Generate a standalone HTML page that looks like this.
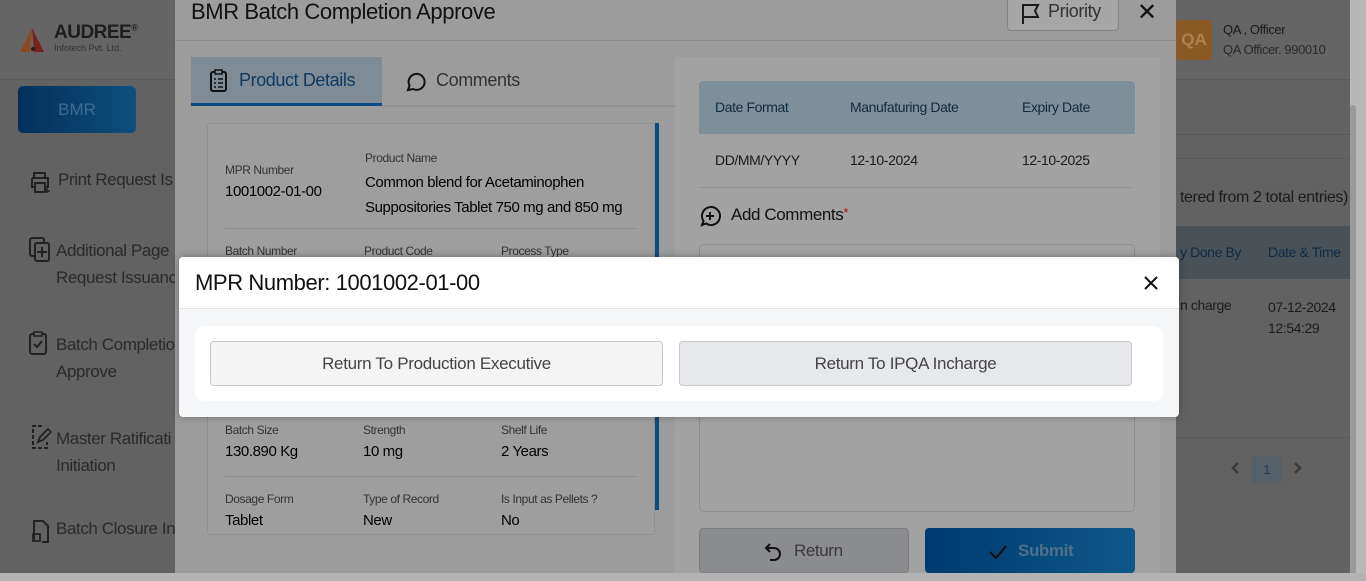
<!DOCTYPE html>
<html><head><meta charset="utf-8"><style>
*{margin:0;padding:0;box-sizing:border-box}
body{width:1366px;height:581px;overflow:hidden;background:#626262;font-family:"Liberation Sans",sans-serif;position:relative;color:#111}
.a{position:absolute;white-space:nowrap}
.n{letter-spacing:-0.4px}
</style></head><body>
<div class="a" style="left:0;top:0;width:1366px;height:80px;background:#656565;border-bottom:1px solid #5a5a5a"></div>
<svg class="a" style="left:20px;top:28px" width="28" height="24"><polygon points="12,0 0,24 10,24" fill="#8a4a20"/><polygon points="12,0 24,24 14,24" fill="#7a2020"/><circle cx="13" cy="21" r="2" fill="#222"/></svg>
<div class="a" style="left:54px;top:22px;font-weight:bold;font-size:19px;color:#1e1e1e;letter-spacing:-0.5px">AUDREE<sup style="font-size:9px">®</sup></div>
<div class="a" style="left:54px;top:43px;font-size:9px;color:#333">Infotech Pvt. Ltd.</div>
<div class="a" style="left:18px;top:86px;width:118px;height:47px;border-radius:5px;background:linear-gradient(90deg,#03305a,#0f4f7c);color:#3f6b8f;font-size:17px;text-align:center;line-height:47px">BMR</div>
<div class="a n" style="left:58px;top:170px;font-size:17px;color:#2a2a2a">Print Request Is</div>
<div class="a n" style="left:56px;top:237px;font-size:17px;color:#2a2a2a;line-height:27px;white-space:normal;width:130px">Additional Page Request Issuanc</div>
<div class="a n" style="left:56px;top:331px;font-size:17px;color:#2a2a2a;line-height:27px;width:130px;white-space:normal">Batch Completio Approve</div>
<div class="a n" style="left:56px;top:425px;font-size:17px;color:#2a2a2a;line-height:27px;width:130px;white-space:normal">Master Ratificati Initiation</div>
<div class="a n" style="left:56px;top:519px;font-size:17px;color:#2a2a2a">Batch Closure In</div>
<svg class="a" style="left:28px;top:170px" width="24" height="24"><path d="M6 8V3h11v5M4 8h16v9h-3M7 17H4V8M7 13h10v9H7z" fill="none" stroke="#222" stroke-width="2"/><path d="M19 18v5M17 21h5" stroke="#222" stroke-width="1.5"/></svg>
<svg class="a" style="left:28px;top:236px" width="24" height="26"><rect x="2" y="2" width="14" height="18" rx="2" fill="none" stroke="#222" stroke-width="2"/><rect x="7" y="7" width="14" height="18" rx="2" fill="#626262" stroke="#222" stroke-width="2"/><path d="M14 11v10M9 16h10" stroke="#222" stroke-width="2"/></svg>
<svg class="a" style="left:28px;top:330px" width="22" height="26"><rect x="2" y="4" width="16" height="20" rx="2" fill="none" stroke="#222" stroke-width="2"/><rect x="6" y="2" width="8" height="4" fill="#626262" stroke="#222" stroke-width="1.5"/><path d="M6 14l3 3 5-6" fill="none" stroke="#222" stroke-width="2"/></svg>
<svg class="a" style="left:30px;top:424px" width="22" height="26"><path d="M12 2H3v22h14v-6" fill="none" stroke="#222" stroke-width="2" stroke-dasharray="4 2"/><path d="M8 18l2-5 8-8 3 3-8 8z" fill="none" stroke="#222" stroke-width="1.8"/></svg>
<svg class="a" style="left:30px;top:518px" width="20" height="26"><path d="M4 24V3h9l5 5v16h-6" fill="none" stroke="#222" stroke-width="2"/><rect x="3" y="16" width="7" height="7" fill="none" stroke="#222" stroke-width="1.8"/></svg>
<div class="a" style="left:1176px;top:20px;width:36px;height:40px;border-radius:4px;background:#8a5a25;color:#b08050;font-weight:bold;font-size:17px;line-height:40px;text-align:center">QA</div>
<div class="a n" style="left:1223px;top:22px;font-size:13px;color:#1a1a1a">QA , Officer</div>
<div class="a n" style="left:1223px;top:42px;font-size:13px;color:#2a2a2a">QA Officer. 990010</div>
<div class="a" style="left:1176px;top:134px;width:174px;height:1px;background:#575757"></div>
<div class="a" style="left:1176px;top:158px;width:174px;height:1px;background:#595959"></div>
<div class="a n" style="left:1180px;top:189px;font-size:16px;color:#1c1c1c">tered from 2 total entries)</div>
<div class="a" style="left:1176px;top:226px;width:174px;height:53px;background:#4a5257"></div>
<div class="a n" style="left:1180px;top:244px;font-size:14px;color:#0e2a45">y Done By</div>
<div class="a n" style="left:1268px;top:244px;font-size:14px;color:#0e2a45">Date &amp; Time</div>
<div class="a n" style="left:1180px;top:297px;font-size:14px;color:#1c1c1c">n charge</div>
<div class="a n" style="left:1268px;top:297px;font-size:14px;color:#1c1c1c;line-height:21px">07-12-2024<br>12:54:29</div>
<div class="a" style="left:1176px;top:437px;width:174px;height:1px;background:#595959"></div>
<svg class="a" style="left:1230px;top:461px" width="12" height="14"><path d="M8 2L3 7l5 5" fill="none" stroke="#3a3a3a" stroke-width="2.5"/></svg>
<div class="a" style="left:1252px;top:456px;width:30px;height:27px;border-radius:4px;background:#566069;color:#1e3a55;font-size:13px;text-align:center;line-height:27px">1</div>
<svg class="a" style="left:1292px;top:461px" width="12" height="14"><path d="M3 2l5 5-5 5" fill="none" stroke="#3a3a3a" stroke-width="2.5"/></svg>
<div class="a" style="left:1350px;top:0;width:16px;height:581px;background:#b8b8b8"></div>
<div class="a" style="left:1350px;top:105px;width:6px;height:470px;background:#9a9a9a;border-radius:3px"></div>
<div class="a" style="left:0;top:573px;width:1366px;height:8px;background:#b3b3b3"></div>

<div class="a" style="left:175px;top:0;width:1001px;height:573px;background:#9c9c9c"></div>
<div class="a" style="left:175px;top:40px;width:1001px;height:1px;background:#8e8e8e"></div>
<div class="a n" style="left:191px;top:-1px;font-size:22px;color:#111">BMR Batch Completion Approve</div>
<div class="a" style="left:1007px;top:-4px;width:112px;height:35px;border:1px solid #838383;border-radius:4px;background:#a6a6a6"></div>
<svg class="a" style="left:1020px;top:2px" width="22" height="24"><path d="M3 22V2M3 3h15l-3 6 3 6H3" fill="none" stroke="#1a1a1a" stroke-width="2"/></svg>
<div class="a n" style="left:1048px;top:1px;font-size:18px;color:#333">Priority</div>
<div class="a" style="left:1137px;top:-2px;font-size:24px;color:#111">✕</div>
<div class="a" style="left:675px;top:57px;width:485px;height:516px;background:#a2a2a2"></div>
<div class="a" style="left:191px;top:57px;width:191px;height:49px;background:#7f8c96"></div>
<div class="a" style="left:191px;top:103px;width:191px;height:3px;background:#0d4b82"></div>
<div class="a" style="left:382px;top:105px;width:293px;height:2px;background:#8f9296"></div>
<svg class="a" style="left:209px;top:69px" width="20" height="24"><rect x="2" y="3" width="15" height="19" rx="2" fill="none" stroke="#111" stroke-width="2"/><rect x="6" y="1" width="7" height="4" fill="#7f8c96" stroke="#111" stroke-width="1.5"/><path d="M5 10h2M9 10h5M5 14h2M9 14h5M5 18h2M9 18h5" stroke="#111" stroke-width="1.5"/></svg>
<div class="a n" style="left:239px;top:70px;font-size:18px;color:#0e3a62">Product Details</div>
<svg class="a" style="left:404px;top:69px" width="24" height="24"><path d="M4 21l1.5-4.5A8 8 0 1 1 9 20z" fill="none" stroke="#111" stroke-width="2"/></svg>
<div class="a n" style="left:436px;top:70px;font-size:18px;color:#333">Comments</div>
<div class="a" style="left:207px;top:123px;width:448px;height:412px;border:1px solid #909090;border-radius:3px;background:#9e9e9e"></div>
<div class="a" style="left:655px;top:123px;width:4px;height:387px;background:#0d4b82"></div>
<div class="a n" style="left:225px;top:163px;font-size:12px;color:#333">MPR Number</div>
<div class="a n" style="left:225px;top:183px;font-size:15px;color:#000">1001002-01-00</div>
<div class="a n" style="left:365px;top:151px;font-size:12px;color:#333">Product Name</div>
<div class="a n" style="left:365px;top:170px;font-size:15px;color:#000;line-height:25px">Common blend for Acetaminophen<br>Suppositories Tablet 750 mg and 850 mg</div>
<div class="a" style="left:225px;top:228px;width:412px;height:1px;background:#8c8c8c"></div>
<div class="a n" style="left:225px;top:244px;font-size:12px;color:#333">Batch Number</div>
<div class="a n" style="left:364px;top:244px;font-size:12px;color:#333">Product Code</div>
<div class="a n" style="left:501px;top:244px;font-size:12px;color:#333">Process Type</div>
<div class="a n" style="left:225px;top:423px;font-size:12px;color:#333">Batch Size</div>
<div class="a n" style="left:363px;top:423px;font-size:12px;color:#333">Strength</div>
<div class="a n" style="left:501px;top:423px;font-size:12px;color:#333">Shelf Life</div>
<div class="a n" style="left:225px;top:443px;font-size:15px;color:#000">130.890 Kg</div>
<div class="a n" style="left:363px;top:443px;font-size:15px;color:#000">10 mg</div>
<div class="a n" style="left:501px;top:443px;font-size:15px;color:#000">2 Years</div>
<div class="a" style="left:225px;top:476px;width:412px;height:1px;background:#8c8c8c"></div>
<div class="a n" style="left:225px;top:492px;font-size:12px;color:#333">Dosage Form</div>
<div class="a n" style="left:363px;top:492px;font-size:12px;color:#333">Type of Record</div>
<div class="a n" style="left:501px;top:492px;font-size:12px;color:#333">Is Input as Pellets ?</div>
<div class="a n" style="left:225px;top:512px;font-size:15px;color:#000">Tablet</div>
<div class="a n" style="left:363px;top:512px;font-size:15px;color:#000">New</div>
<div class="a n" style="left:501px;top:512px;font-size:15px;color:#000">No</div>
<div class="a" style="left:699px;top:81px;width:436px;height:53px;background:#7f8f99;border-radius:4px 4px 0 0"></div>
<div class="a n" style="left:715px;top:99px;font-size:14px;color:#0e2a45">Date Format</div>
<div class="a n" style="left:850px;top:99px;font-size:14px;color:#0e2a45">Manufaturing Date</div>
<div class="a n" style="left:1022px;top:99px;font-size:14px;color:#0e2a45">Expiry Date</div>
<div class="a n" style="left:715px;top:152px;font-size:14px;color:#1a1a1a">DD/MM/YYYY</div>
<div class="a n" style="left:850px;top:152px;font-size:14px;color:#1a1a1a">12-10-2024</div>
<div class="a n" style="left:1022px;top:152px;font-size:14px;color:#1a1a1a">12-10-2025</div>
<div class="a" style="left:699px;top:187px;width:432px;height:1px;background:#8e8e8e"></div>
<svg class="a" style="left:699px;top:205px" width="22" height="22"><path d="M3 20l1.5-4A9 9 0 1 1 7 18.5z" fill="none" stroke="#111" stroke-width="2"/><path d="M11 7v8M7 11h8" stroke="#111" stroke-width="2"/></svg>
<div class="a n" style="left:731px;top:205px;font-size:17px;color:#111">Add Comments<span style="color:#a01010;font-size:13px;vertical-align:top">*</span></div>
<div class="a" style="left:699px;top:244px;width:436px;height:268px;border:1px solid #8e8e8e;border-radius:5px;background:#a2a2a2"></div>
<div class="a" style="left:699px;top:528px;width:210px;height:45px;border:1px solid #7f7f7f;border-radius:4px;background:#8b8c90"></div>
<svg class="a" style="left:764px;top:541px" width="20" height="22"><path d="M6 3L2 7l4 4M2 7h8a6 6 0 0 1 0 12H6" fill="none" stroke="#111" stroke-width="2"/></svg>
<div class="a n" style="left:794px;top:541px;font-size:17px;color:#3a3a3a">Return</div>
<div class="a" style="left:925px;top:528px;width:210px;height:45px;border-radius:4px;background:linear-gradient(90deg,#003a6e,#0d5888)"></div>
<svg class="a" style="left:988px;top:543px" width="20" height="18"><path d="M2 9l6 6L18 3" fill="none" stroke="#0a0a0a" stroke-width="2"/></svg>
<div class="a n" style="left:1018px;top:541px;font-size:17px;color:#4f6f8a;font-weight:bold">Submit</div>

<div class="a" style="left:179px;top:257px;width:1000px;height:160px;background:#f5f6f8;border-radius:4px;box-shadow:0 0 8px rgba(0,0,0,.3)"></div>
<div class="a" style="left:179px;top:257px;width:1000px;height:52px;background:#fff;border-bottom:1px solid #e3e4e6;border-radius:4px 4px 0 0"></div>
<div class="a n" style="left:195px;top:270px;font-size:22px;color:#111">MPR Number: 1001002-01-00</div>
<svg class="a" style="left:1143px;top:275px" width="16" height="16"><path d="M2 2l12 12M14 2L2 14" stroke="#111" stroke-width="2"/></svg>
<div class="a" style="left:195px;top:326px;width:968px;height:75px;background:#fff;border-radius:10px"></div>
<div class="a" style="left:210px;top:341px;width:453px;height:45px;background:#f4f4f5;border:1px solid #c8c8ca;border-radius:4px;text-align:center;line-height:43px;font-size:17px;color:#444;letter-spacing:-0.3px">Return To Production Executive</div>
<div class="a" style="left:679px;top:341px;width:453px;height:45px;background:#e6e8ec;border:1px solid #c8c8ca;border-radius:4px;text-align:center;line-height:43px;font-size:17px;color:#444;letter-spacing:-0.3px">Return To IPQA Incharge</div>
</body></html>
